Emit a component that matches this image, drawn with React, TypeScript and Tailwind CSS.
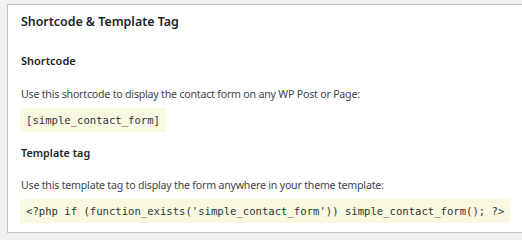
export default function App() {
  const mono = { fontFamily: '"DejaVu Sans Mono", monospace' };
  return (
    <div className="w-[522px] h-[240px] overflow-hidden bg-[#f0f0f1] pt-[4px] pl-[7px]" style={{ fontFamily: '"Noto Sans", sans-serif' }}>
      <div className="w-[540px] h-[229px] border border-[#c3c4c7] bg-white pl-[13px] flex flex-col items-start">
        <div className="mt-[7px] h-[20px] leading-[20px] text-[12.4px] font-semibold text-[#1d2327]">Shortcode &amp; Template Tag</div>
        <div className="mt-[19px] h-[20px] leading-[20px] text-[11px] font-semibold text-[#1d2327]">Shortcode</div>
        <div className="mt-[13px] h-[20px] leading-[20px] text-[10.6px] tracking-[-0.2px] text-[#3c434a]">Use this shortcode to display the contact form on any WP Post or Page:</div>
        <div className="mt-[4px] -ml-[1px] h-[24px] leading-[24px] px-[6px] bg-[#f9f9e1] text-[10.6px] text-[#2c3338]" style={mono}>[simple_contact_form]</div>
        <div className="mt-[11px] h-[20px] leading-[20px] text-[10.8px] font-semibold text-[#1d2327]">Template tag</div>
        <div className="mt-[12px] h-[20px] leading-[20px] text-[10.6px] tracking-[-0.2px] text-[#3c434a]">Use this template tag to display the form anywhere in your theme template:</div>
        <div className="mt-[4px] -ml-[1px] h-[24px] leading-[24px] px-[6px] bg-[#f9f9e1] text-[10.6px] text-[#2c3338]" style={mono}>{"<?php if (function_exists('simple_contact_form')) simple_contact_form(); ?>"}</div>
      </div>
    </div>
  );
}
